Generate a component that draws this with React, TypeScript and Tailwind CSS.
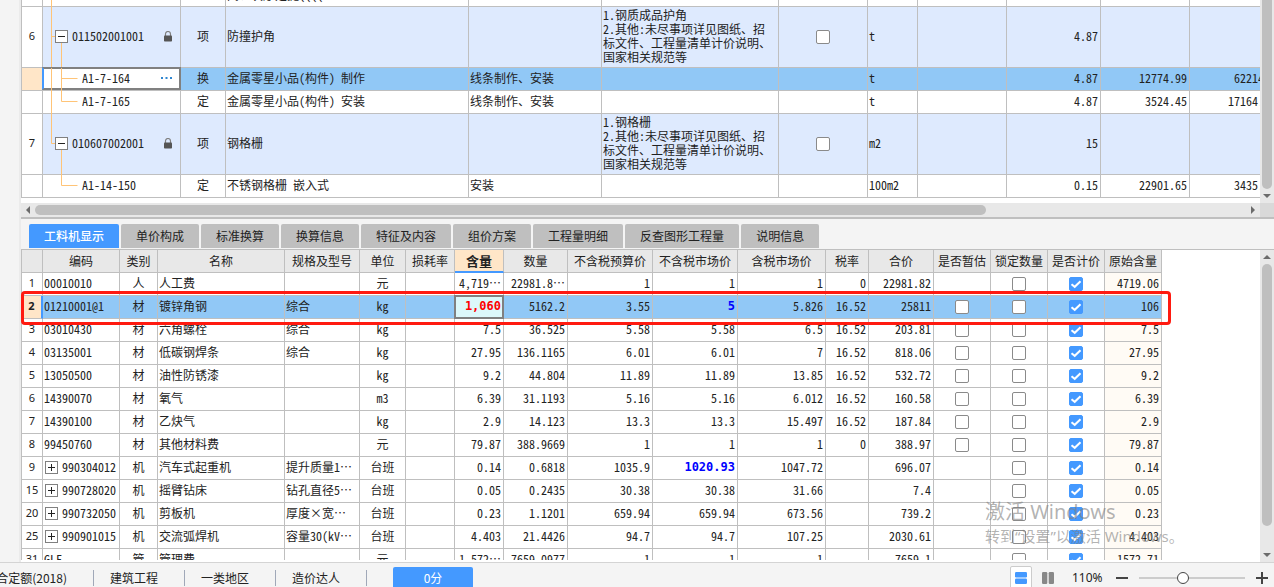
import type { ReactNode } from 'react';

const lineColor = 'border-[#bfbfbf]';
const gridFont = "font-['Noto_Sans_CJK_SC',sans-serif] [font-feature-settings:'hwid'] text-xs leading-[14px] text-[#222]";
const frame = `border-r border-b ${lineColor} px-px whitespace-nowrap overflow-hidden`;
const cell = `${frame} pt-0 pb-0.5`;
const midCell = `${frame} py-0`;
const numCell = `${cell} pr-0.5 text-right`;
const noCell = `${cell} border-l text-center font-['Noto_Sans',sans-serif] text-[11px]`;

function Box({ open }: { open: boolean }) {
  return (
    <svg width="13" height="13" viewBox="0 0 13 13" className="block">
      <rect x="0.5" y="0.5" width="12" height="12" fill="#fff" stroke="#808080" />
      <path d={open ? 'M3 6.5h7' : 'M3 6.5h7M6.5 3v7'} stroke="#222" />
    </svg>
  );
}

function Tick({ checked, label }: { checked?: boolean; label: string }) {
  return (
    <span className="relative block size-3.5 mx-auto">
      <input
        type="checkbox"
        aria-label={label}
        defaultChecked={checked}
        className="peer block size-3.5 appearance-none rounded-xs border border-[#8a8a8a] bg-white checked:border-[#4499ff] checked:bg-[#4499ff]"
      />
      <svg viewBox="0 0 14 14" className="pointer-events-none absolute inset-0 hidden size-3.5 peer-checked:block">
        <path d="M2.5 7.2l3.200 2.600 5.800-5.600" fill="none" stroke="#fff" strokeWidth="2" />
      </svg>
    </span>
  );
}

function Lock() {
  return (
    <svg width="10" height="11" viewBox="0 0 10 11">
      <path d="M2.5 5V3a2.5 2.5 0 0 1 5 0v2" fill="none" stroke="#808080" strokeWidth="1.2" />
      <rect x="1" y="4.5" width="8" height="6" rx="0.8" fill="#555" />
    </svg>
  );
}

function Clipped({ text }: { text: string }) {
  if (!text.endsWith('…')) return <>{text}</>;
  return (
    <>
      {text.slice(0, -1)}
      <span className="inline-block">…</span>
    </>
  );
}

type Item = {
  no?: string;
  kind: 'group' | 'child';
  code: string;
  type: string;
  name: string;
  spec?: string;
  detail?: string[];
  unit: string;
  qty: string;
  price?: string;
  total?: string;
  tree: string;
  active?: boolean;
};

const terms = ['2.其他:未尽事项详见图纸、招', '标文件、工程量清单计价说明、', '国家相关规范等'];

const items: Item[] = [
  { no: '6', kind: 'group', code: '011502001001', type: '项', name: '防撞护角', detail: ['1.钢质成品护角', ...terms], unit: 't', qty: '4.87', tree: 'M8.5 0v61M8.5 29.5h4M18.5 36v25' },
  { kind: 'child', code: 'A1-7-164', type: '换', name: '金属零星小品(构件) 制作', spec: '线条制作、安装', unit: 't', qty: '4.87', price: '12774.99', total: '62214.2', tree: 'M8.5 0v23M18.5 0v23M18.5 10.5h16', active: true },
  { kind: 'child', code: 'A1-7-165', type: '定', name: '金属零星小品(构件) 安装', spec: '线条制作、安装', unit: 't', qty: '4.87', price: '3524.45', total: '17164.07', tree: 'M8.5 0v23M18.5 0v10.5h16' },
  { no: '7', kind: 'group', code: '010607002001', type: '项', name: '钢格栅', detail: ['1.钢格栅', ...terms], unit: 'm2', qty: '15', tree: 'M8.5 0v29.5h4M18.5 36v25' },
  { kind: 'child', code: 'A1-14-150', type: '定', name: '不锈钢格栅 嵌入式', spec: '安装', unit: '100m2', qty: '0.15', price: '22901.65', total: '3435.25', tree: 'M18.5 0v10.5h16' },
];

function ItemRow({ item }: { item: Item }) {
  const group = item.kind === 'group';
  const fill = item.active ? 'bg-[#91c8f6]' : group ? 'bg-[#deeafe]' : 'bg-white';
  return (
    <tr className={group ? 'h-[61px]' : 'h-[23px]'}>
      <td className={`${noCell} ${item.active ? 'bg-[#ffe6c8]' : 'bg-white'}`}>{item.no}</td>
      <td className={`${cell} relative overflow-visible ${item.active ? 'bg-white' : fill}`}>
        {item.active && <span className="absolute -inset-x-px -top-px bottom-0 border-2 border-[#808080] border-l-[#4499ff]" />}
        <svg className={`absolute left-0 top-0 w-10 ${group ? 'h-[61px]' : 'h-[23px]'}`}>
          <path d={item.tree} fill="none" stroke="#ffc477" />
        </svg>
        {group && (
          <button aria-label={`收起 ${item.code}`} className="absolute left-3 top-[23px]">
            <Box open />
          </button>
        )}
        <span className={`flex items-center justify-between pr-1.5 ${group ? 'pl-7' : 'pl-[38px]'}`}>
          {item.code}
          {group && <Lock />}
          {item.active && (
            <svg width="12" height="2" viewBox="0 0 12 2">
              <path d="M0 1h2M4.500 1h2M9 1h2" stroke="#2f86d0" strokeWidth="2" />
            </svg>
          )}
        </span>
      </td>
      <td className={`${cell} ${fill} text-center`}>{item.type}</td>
      <td className={`${cell} ${fill}`}>{item.name}</td>
      <td className={`${cell} ${fill}`}>{item.spec}</td>
      <td className={`${cell} ${fill}`}>{item.detail?.map((d) => <div key={d}>{d}</div>)}</td>
      <td className={`${midCell} ${fill}`}>{group && <Tick label={`${item.name} 选项`} />}</td>
      <td className={`${cell} ${fill}`}>{item.unit}</td>
      <td className={`${cell} ${fill}`} />
      <td className={`${numCell} ${fill}`}>{item.qty}</td>
      <td className={`${numCell} ${fill}`}>{item.price}</td>
      <td className={`${numCell} ${fill}`}>{item.total}</td>
    </tr>
  );
}

function UpperGrid() {
  return (
    <table className={`w-[1258px] shrink-0 table-fixed border-separate border-spacing-0 ${gridFont}`}>
      <colgroup>
        <col className="w-[22px]" />
        <col className="w-[138px]" />
        <col className="w-[45px]" />
        <col className="w-[243px]" />
        <col className="w-[133px]" />
        <col className="w-[177px]" />
        <col className="w-[89px]" />
        <col className="w-[50px]" />
        <col className="w-[89px]" />
        <col className="w-[94px]" />
        <col className="w-[89px]" />
        <col className="w-[89px]" />
      </colgroup>
      <tbody>
        <tr className="h-[23px]">
          <td className={`${cell} border-l bg-white`} />
          <td className={`${cell} relative overflow-visible bg-white`}>
            <svg className="absolute left-0 top-0 h-[23px] w-10">
              <path d="M8.5 0v23" stroke="#ffc477" />
            </svg>
          </td>
          <td className={`${cell} bg-white`} />
          <td className={`${frame} bg-white pb-1 align-bottom`}>间、次序定提((((</td>
          {Array.from({ length: 8 }, (_, i) => (
            <td key={i} className={`${cell} bg-white`} />
          ))}
        </tr>
        {items.map((item) => (
          <ItemRow key={item.code} item={item} />
        ))}
      </tbody>
    </table>
  );
}

type Res = {
  no: string;
  code: string;
  type: string;
  name: string;
  spec: string;
  unit: string;
  nums: string[];
  est: boolean;
  orig: string;
  more?: boolean;
};

const r = (no: string, code: string, type: string, name: string, spec: string, unit: string, nums: string, est: boolean, orig: string, more = false): Res => ({
  no, code, type, name, spec, unit, nums: nums.split(' '), est, orig, more,
});

const resources: Res[] = [
  r('1', '00010010', '人', '人工费', '', '元', '4,719… 22981.8… 1 1 1 0 22981.82', false, '4719.06'),
  r('2', '01210001@1', '材', '镀锌角钢', '综合', 'kg', '1,060 5162.2 3.55 5 5.826 16.52 25811', true, '106'),
  r('3', '03010430', '材', '六角螺栓', '综合', 'kg', '7.5 36.525 5.58 5.58 6.5 16.52 203.81', true, '7.5'),
  r('4', '03135001', '材', '低碳钢焊条', '综合', 'kg', '27.95 136.1165 6.01 6.01 7 16.52 818.06', true, '27.95'),
  r('5', '13050500', '材', '油性防锈漆', '', 'kg', '9.2 44.804 11.89 11.89 13.85 16.52 532.72', true, '9.2'),
  r('6', '14390070', '材', '氧气', '', 'm3', '6.39 31.1193 5.16 5.16 6.012 16.52 160.58', true, '6.39'),
  r('7', '14390100', '材', '乙炔气', '', 'kg', '2.9 14.123 13.3 13.3 15.497 16.52 187.84', true, '2.9'),
  r('8', '99450760', '材', '其他材料费', '', '元', '79.87 388.9669 1 1 1 0 388.97', true, '79.87'),
  r('9', '990304012', '机', '汽车式起重机', '提升质量1…', '台班', '0.14 0.6818 1035.9 1020.93 1047.72  696.07', false, '0.14', true),
  r('15', '990728020', '机', '摇臂钻床', '钻孔直径5…', '台班', '0.05 0.2435 30.38 30.38 31.66  7.4', false, '0.05', true),
  r('20', '990732050', '机', '剪板机', '厚度×宽…', '台班', '0.23 1.1201 659.94 659.94 673.56  739.2', false, '0.23', true),
  r('25', '990901015', '机', '交流弧焊机', '容量30(kV…', '台班', '4.403 21.4426 94.7 94.7 107.25  2030.61', false, '4.403', true),
  r('31', 'GLF', '管', '管理费', '', '元', '1,572… 7659.0977 1 1 1  7659.1', false, '1572.71'),
];

const heads = ['', '编码', '类别', '名称', '规格及型号', '单位', '损耗率', '含量', '数量', '不含税预算价', '不含税市场价', '含税市场价', '税率', '合价', '是否暂估', '锁定数量', '是否计价', '原始含量'];

const strong = "font-['DejaVu_Sans_Mono',monospace] font-bold";

function ResRow({ row }: { row: Res }) {
  const active = row.no === '2';
  const fill = active ? 'bg-[#91c8f6]' : 'bg-white';
  return (
    <tr className="h-[23px]">
      <td className={`${noCell} ${active ? 'border-r-2 border-r-[#4499ff] bg-[#ffe6c8] font-bold' : 'bg-white'}`}>{row.no}</td>
      <td className={`${cell} ${fill}`}>
        <span className={`flex items-center gap-1 ${row.more ? 'pl-px' : ''}`}>
          {row.more && (
            <button aria-label={`展开 ${row.code}`}>
              <Box open={false} />
            </button>
          )}
          {row.code}
        </span>
      </td>
      <td className={`${cell} ${fill} text-center`}>{row.type}</td>
      <td className={`${cell} ${fill}`}>{row.name}</td>
      <td className={`${cell} ${fill}`}>
        <Clipped text={row.spec} />
      </td>
      <td className={`${cell} ${fill} text-center`}>{row.unit}</td>
      <td className={`${cell} ${fill}`} />
      {row.nums.map((n, i) => {
        if (active && i === 0) {
          return (
            <td key={i} className={`${numCell} relative overflow-visible bg-[#dcf8fa] text-[#f00] ${strong}`}>
              <span className="absolute -inset-px border-2 border-[#808080]" />
              {n}
            </td>
          );
        }
        const edited = n === '5' || n === '1020.93';
        return (
          <td key={i} className={`${numCell} ${fill} ${edited ? `text-[#00f] ${strong}` : ''}`}>
            <Clipped text={n} />
          </td>
        );
      })}
      <td className={`${midCell} ${fill}`}>{row.est && <Tick label={`${row.name} 是否暂估`} />}</td>
      <td className={`${midCell} ${fill}`}>
        <Tick label={`${row.name} 锁定数量`} />
      </td>
      <td className={`${midCell} ${fill}`}>
        <Tick checked label={`${row.name} 是否计价`} />
      </td>
      <td className={`${numCell} ${active ? fill : 'bg-[#fffbf5]'}`}>{row.orig}</td>
    </tr>
  );
}

function LowerGrid() {
  return (
    <table className={`w-[1141px] table-fixed border-separate border-spacing-0 ${gridFont}`}>
      <colgroup>
        <col className="w-[22px]" />
        <col className="w-[77px]" />
        <col className="w-[38px]" />
        <col className="w-[127px]" />
        <col className="w-[75px]" />
        <col className="w-[46px]" />
        <col className="w-[49px]" />
        <col className="w-[49px]" />
        <col className="w-[64px]" />
        <col className="w-[85px]" />
        <col className="w-[85px]" />
        <col className="w-[88px]" />
        <col className="w-[43px]" />
        <col className="w-[65px]" />
        <col className="w-[57px]" />
        <col className="w-[57px]" />
        <col className="w-[57px]" />
        <col className="w-[57px]" />
      </colgroup>
      <thead>
        <tr className="h-[23px]">
          {heads.map((h) => (
            <th
              key={h}
              className={`${midCell} text-center first:border-l ${h === '含量' ? 'border-b-2 border-b-[#4499ff] bg-[#ffe6c8] text-[13px] font-bold' : 'bg-[#e8e8e8] font-normal'}`}
            >
              {h}
            </th>
          ))}
        </tr>
      </thead>
      <tbody>
        {resources.map((row) => (
          <ResRow key={row.no} row={row} />
        ))}
      </tbody>
    </table>
  );
}

function Arrow({ d }: { d: string }) {
  return (
    <svg width="14" height="14" viewBox="0 0 14 14" className="block shrink-0">
      <path d={d} fill="#6b6b6b" />
    </svg>
  );
}
const up = 'M3 9l4-4 4 4z';
const down = 'M3 5h8L7 9z';
const leftward = 'M9 3v8L5 7z';
const rightward = 'M5 3l4 4-4 4z';

const tabs = ['工料机显示', '单价构成', '标准换算', '换算信息', '特征及内容', '组价方案', '工程量明细', '反查图形工程量', '说明信息'];

function StatusItem({ children }: { children: ReactNode }) {
  return <span className="flex h-4 items-center border-r border-[#a0a8b8] pl-4 pr-[26px]">{children}</span>;
}

export default function App() {
  return (
    <div lang="zh-CN" className="flex h-screen flex-col overflow-hidden bg-[#f4f4f4] font-['Noto_Sans_CJK_SC',sans-serif] text-xs text-[#222]">
      <main className="flex min-h-0 flex-1 pl-[19px]">
        <div className="flex min-w-0 flex-1 flex-col border-l-2 border-[#ebebeb]">
          <section className="flex h-[219px] shrink-0 flex-col border-b-2 border-[#bfbfbf]">
            <div className="flex min-h-0 flex-1">
              <div className="flex min-w-0 flex-1 flex-col justify-end overflow-hidden bg-white pb-[5px]">
                <UpperGrid />
              </div>
              <div className="flex w-3.5 shrink-0 flex-col items-center bg-[#e8e8e8]">
                <div className="w-2.5 flex-1 rounded-b-full bg-[#bfbfbf]" />
                <Arrow d={down} />
              </div>
            </div>
            <div className="flex h-3.5 shrink-0">
              <div className="flex flex-1 items-center bg-[#e8e8e8]">
                <Arrow d={leftward} />
                <div className="flex-1">
                  <div className="h-2.5 w-[78.5%] rounded-full bg-[#bfbfbf]" />
                </div>
                <Arrow d={rightward} />
              </div>
              <div className="w-3.5 bg-[#d9d9d9]" />
            </div>
          </section>

          <nav className="flex h-[29px] shrink-0 items-end gap-0.5 pl-2">
            {tabs.map((t, i) => (
              <button
                key={t}
                className={`h-6 shrink-0 rounded-t-xs px-[15px] leading-6 ${i === 0 ? 'bg-[#4499ff] font-medium text-white' : 'bg-[#bfbfbf] text-[#222]'}`}
              >
                {t}
              </button>
            ))}
          </nav>

          <section className="mt-px flex min-h-0 flex-1 border-t border-[#bfbfbf] bg-white">
            <div className="relative mb-0.5 min-w-0 flex-1 overflow-hidden">
              <LowerGrid />
              <div className="pointer-events-none absolute left-0 top-[41px] h-[34px] w-[1150px] rounded-sm border-3 border-[#ff1a10]" />
            </div>
            <div className="flex w-3.5 shrink-0 flex-col items-center bg-[#e8e8e8]">
              <Arrow d={up} />
              <div className="mb-[22px] w-2.5 flex-1 rounded-full bg-[#bfbfbf]" />
              <Arrow d={down} />
            </div>
          </section>
        </div>
      </main>

      <footer className="h-[25px] shrink-0 overflow-hidden border-t border-[#d4d4d4]">
        <div className="flex h-[30px] items-center">
          <span className="flex h-4 w-[94px] items-center justify-end border-r border-[#a0a8b8] pr-[26px] whitespace-nowrap">综合定额(2018)</span>
          <StatusItem>建筑工程</StatusItem>
          <StatusItem>一类地区</StatusItem>
          <StatusItem>造价达人</StatusItem>
          <button className="ml-[26px] h-[22px] w-20 rounded-xs bg-[#4499ff] text-white">0分</button>
          <div className="ml-auto flex items-center pr-1.5">
            <button aria-label="上下布局" className="flex h-6 w-[22px] items-center justify-center rounded-xs border border-[#ccc] bg-white">
              <svg width="12" height="12" viewBox="0 0 12 12">
                <rect width="12" height="5.500" rx="1.2" fill="#4499ff" />
                <rect y="6.500" width="12" height="5.500" rx="1.2" fill="#4499ff" />
              </svg>
            </button>
            <button aria-label="左右布局" className="ml-2.5">
              <svg width="12" height="12" viewBox="0 0 12 12">
                <rect width="5.300" height="12" rx="1.2" fill="#888" />
                <rect x="6.700" width="5.300" height="12" rx="1.2" fill="#888" />
              </svg>
            </button>
            <span className="ml-[18px] w-8 font-['Noto_Sans',sans-serif] text-xs">110%</span>
            <button aria-label="缩小" className="ml-3">
              <svg width="12" height="12" viewBox="0 0 12 12">
                <path d="M0 6h12" stroke="#444" strokeWidth="2" />
              </svg>
            </button>
            <input
              type="range"
              aria-label="缩放"
              min="0"
              max="100"
              defaultValue="40"
              className="ml-[11px] h-3 w-[106px] appearance-none bg-transparent [&::-webkit-slider-runnable-track]:h-0.5 [&::-webkit-slider-runnable-track]:bg-[#ccc] [&::-webkit-slider-thumb]:-mt-[5px] [&::-webkit-slider-thumb]:size-3 [&::-webkit-slider-thumb]:appearance-none [&::-webkit-slider-thumb]:rounded-full [&::-webkit-slider-thumb]:border [&::-webkit-slider-thumb]:border-[#444] [&::-webkit-slider-thumb]:bg-white"
            />
            <button aria-label="放大" className="ml-[11px]">
              <svg width="12" height="12" viewBox="0 0 12 12">
                <path d="M0 6h12M6 0v12" stroke="#444" strokeWidth="2" />
              </svg>
            </button>
          </div>
        </div>
      </footer>

      <div className="pointer-events-none absolute right-[89px] bottom-[41px] w-[200px] whitespace-nowrap font-['Noto_Sans','Noto_Sans_CJK_SC',sans-serif] text-[#808080]/60">
        <p className="text-xl leading-7">激活 Windows</p>
        <p className="text-[15px] leading-5">转到“设置”以激活 Windows。</p>
      </div>
    </div>
  );
}
